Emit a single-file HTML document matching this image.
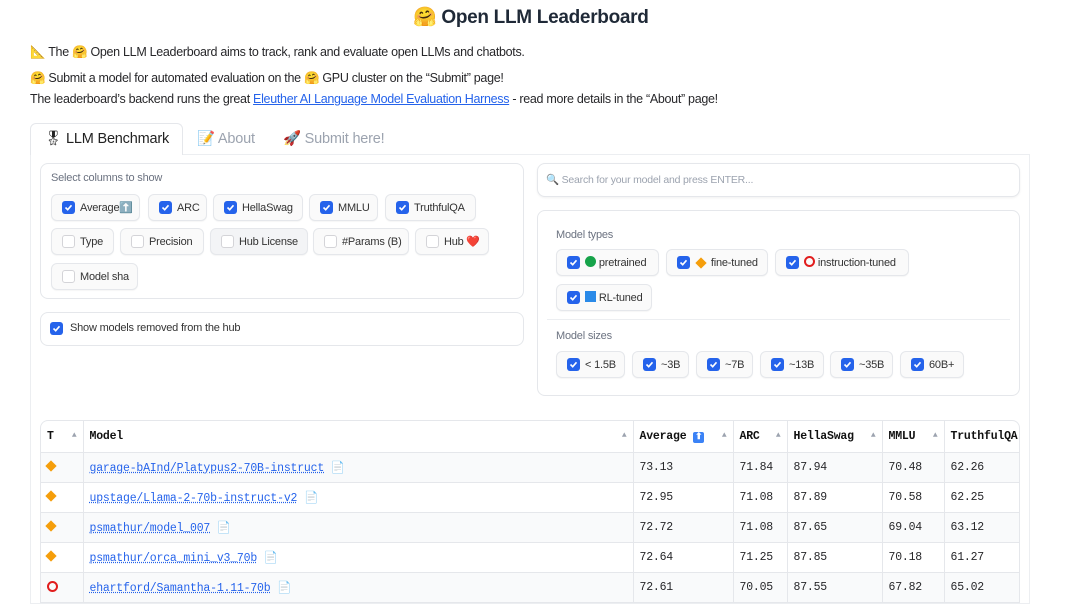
<!DOCTYPE html>
<html><head><meta charset="utf-8">
<style>
*{box-sizing:border-box;margin:0;padding:0}
body{width:1080px;height:595px;overflow:hidden;background:#fff;font-family:"Liberation Sans","Noto Sans CJK SC",sans-serif;color:#27272a;position:relative}
.a{position:absolute;white-space:nowrap}
.t{font-size:12.5px;letter-spacing:-0.3px}
.box{position:absolute;border:1px solid #e5e7eb;border-radius:8px;background:#fff}
.pill{position:absolute;height:27px;border:1px solid #e5e7eb;border-radius:6px;background:#fafafa;box-shadow:0 1px 1px rgba(0,0,0,.04);font-size:11px;letter-spacing:-0.2px;color:#333;line-height:27px;padding-left:28px}
.cb{position:absolute;left:10px;top:6px;width:13px;height:13px;border-radius:3px;background:#2563eb}
.cb svg{position:absolute;left:2px;top:2px}
.cb.off{background:#fff;border:1px solid #d4d4d8}
.lbl{font-size:11px;color:#6b7280;letter-spacing:-0.2px}
table{border-collapse:collapse;font-family:"Liberation Mono",monospace;font-size:11.5px;letter-spacing:-0.2px}
td,th{border-right:1px solid #e5e7eb;border-bottom:1px solid #e5e7eb;padding:0 6px;text-align:left;height:30px;vertical-align:middle}
th{font-weight:bold;color:#111;position:relative;height:31px}
th .s{position:absolute;right:6px;top:10px;font-size:8px;color:#9ca3af}
tr.g td{background:#f9fafb}
td a{color:#2563eb;text-decoration:underline dotted;}
.dia{display:inline-block;width:8px;height:8px;background:#f59e0b;transform:rotate(45deg);vertical-align:middle}
</style></head><body>
<div class="a" style="left:413px;top:5px;font-size:19px;font-weight:bold;color:#1f2937;letter-spacing:-0.3px">🤗 Open LLM Leaderboard</div>
<div class="a t" style="left:30px;top:45px">📐 The 🤗 Open LLM Leaderboard aims to track, rank and evaluate open LLMs and chatbots.</div>
<div class="a t" style="left:30px;top:71px">🤗 Submit a model for automated evaluation on the 🤗 GPU cluster on the “Submit” page!</div>
<div class="a t" style="left:30px;top:92px">The leaderboard’s backend runs the great <span style="color:#2563eb;text-decoration:underline">Eleuther AI Language Model Evaluation Harness</span> - read more details in the “About” page!</div>

<div class="a" style="left:30px;top:123px;width:153px;height:32px;border:1px solid #e5e7eb;border-bottom:none;border-radius:6px 6px 0 0;background:#fff;z-index:2"></div>
<div class="a" style="left:44px;top:130px;font-size:14.5px;color:#222;z-index:3;letter-spacing:-0.2px">🎖 LLM Benchmark</div>
<div class="a" style="left:197px;top:130px;font-size:14.5px;color:#9ca3af;letter-spacing:-0.2px">📝 About</div>
<div class="a" style="left:283px;top:130px;font-size:14.5px;color:#9ca3af;letter-spacing:-0.2px">🚀 Submit here!</div>
<div class="a" style="left:30px;top:154px;width:1000px;height:450px;border:1px solid #eceef1;background:#fff"></div>

<div class="box" style="left:40px;top:163px;width:484px;height:136px"></div>
<div class="a lbl" style="left:51px;top:172px">Select columns to show</div>
<div class="pill" style="left:51px;top:194px;width:89px"><span class="cb"><svg width="9" height="9"><path d="M1.5 4.5 L3.7 6.7 L7.5 2.3" stroke="#fff" stroke-width="1.6" fill="none"/></svg></span>Average⬆️</div>
<div class="pill" style="left:148px;top:194px;width:59px"><span class="cb"><svg width="9" height="9"><path d="M1.5 4.5 L3.7 6.7 L7.5 2.3" stroke="#fff" stroke-width="1.6" fill="none"/></svg></span>ARC</div>
<div class="pill" style="left:213px;top:194px;width:90px"><span class="cb"><svg width="9" height="9"><path d="M1.5 4.5 L3.7 6.7 L7.5 2.3" stroke="#fff" stroke-width="1.6" fill="none"/></svg></span>HellaSwag</div>
<div class="pill" style="left:309px;top:194px;width:69px"><span class="cb"><svg width="9" height="9"><path d="M1.5 4.5 L3.7 6.7 L7.5 2.3" stroke="#fff" stroke-width="1.6" fill="none"/></svg></span>MMLU</div>
<div class="pill" style="left:385px;top:194px;width:91px"><span class="cb"><svg width="9" height="9"><path d="M1.5 4.5 L3.7 6.7 L7.5 2.3" stroke="#fff" stroke-width="1.6" fill="none"/></svg></span>TruthfulQA</div>
<div class="pill" style="left:51px;top:228px;width:63px"><span class="cb off"></span>Type</div>
<div class="pill" style="left:120px;top:228px;width:84px"><span class="cb off"></span>Precision</div>
<div class="pill" style="left:210px;top:228px;width:98px;background:#f3f4f6"><span class="cb off"></span>Hub License</div>
<div class="pill" style="left:313px;top:228px;width:96px"><span class="cb off"></span>#Params (B)</div>
<div class="pill" style="left:415px;top:228px;width:74px"><span class="cb off"></span>Hub ❤️</div>
<div class="pill" style="left:51px;top:263px;width:87px"><span class="cb off"></span>Model sha</div>

<div class="box" style="left:40px;top:312px;width:484px;height:34px"></div>
<div class="a" style="left:50px;top:322px;width:13px;height:13px;border-radius:3px;background:#2563eb"><svg width="9" height="9" style="position:absolute;left:2px;top:2px"><path d="M1.5 4.5 L3.7 6.7 L7.5 2.3" stroke="#fff" stroke-width="1.6" fill="none"/></svg></div>
<div class="a" style="left:70px;top:322px;font-size:11px;color:#333;letter-spacing:-0.2px">Show models removed from the hub</div>

<div class="box" style="left:537px;top:163px;width:483px;height:34px;box-shadow:0 1px 2px rgba(0,0,0,.06)"></div>
<div class="a" style="left:546px;top:173px;font-size:10.5px;color:#9ca3af;letter-spacing:-0.2px">🔍 Search for your model and press ENTER...</div>

<div class="box" style="left:537px;top:210px;width:483px;height:186px"></div>
<div class="a" style="left:547px;top:319px;width:463px;height:1px;background:#eceef1"></div>
<div class="a lbl" style="left:556px;top:229px">Model types</div>
<div class="pill" style="left:556px;top:249px;width:103px"><span class="cb"><svg width="9" height="9"><path d="M1.5 4.5 L3.7 6.7 L7.5 2.3" stroke="#fff" stroke-width="1.6" fill="none"/></svg></span><span style="display:inline-block;width:11px;height:11px;border-radius:50%;background:#16a34a;vertical-align:-1px"></span> pretrained</div>
<div class="pill" style="left:666px;top:249px;width:102px"><span class="cb"><svg width="9" height="9"><path d="M1.5 4.5 L3.7 6.7 L7.5 2.3" stroke="#fff" stroke-width="1.6" fill="none"/></svg></span><span class="dia" style="margin:0 3px 0 2px"></span> fine-tuned</div>
<div class="pill" style="left:775px;top:249px;width:134px"><span class="cb"><svg width="9" height="9"><path d="M1.5 4.5 L3.7 6.7 L7.5 2.3" stroke="#fff" stroke-width="1.6" fill="none"/></svg></span><span style="display:inline-block;width:11px;height:11px;border-radius:50%;border:2px solid #e11d1d;vertical-align:-1px"></span> instruction-tuned</div>
<div class="pill" style="left:556px;top:284px;width:96px"><span class="cb"><svg width="9" height="9"><path d="M1.5 4.5 L3.7 6.7 L7.5 2.3" stroke="#fff" stroke-width="1.6" fill="none"/></svg></span><span style="display:inline-block;width:11px;height:11px;background:#2a8ae8;vertical-align:-1px"></span> RL-tuned</div>
<div class="a lbl" style="left:556px;top:330px">Model sizes</div>
<div class="pill" style="left:556px;top:351px;width:69px"><span class="cb"><svg width="9" height="9"><path d="M1.5 4.5 L3.7 6.7 L7.5 2.3" stroke="#fff" stroke-width="1.6" fill="none"/></svg></span>&lt; 1.5B</div>
<div class="pill" style="left:632px;top:351px;width:57px"><span class="cb"><svg width="9" height="9"><path d="M1.5 4.5 L3.7 6.7 L7.5 2.3" stroke="#fff" stroke-width="1.6" fill="none"/></svg></span>~3B</div>
<div class="pill" style="left:696px;top:351px;width:57px"><span class="cb"><svg width="9" height="9"><path d="M1.5 4.5 L3.7 6.7 L7.5 2.3" stroke="#fff" stroke-width="1.6" fill="none"/></svg></span>~7B</div>
<div class="pill" style="left:760px;top:351px;width:64px"><span class="cb"><svg width="9" height="9"><path d="M1.5 4.5 L3.7 6.7 L7.5 2.3" stroke="#fff" stroke-width="1.6" fill="none"/></svg></span>~13B</div>
<div class="pill" style="left:830px;top:351px;width:63px"><span class="cb"><svg width="9" height="9"><path d="M1.5 4.5 L3.7 6.7 L7.5 2.3" stroke="#fff" stroke-width="1.6" fill="none"/></svg></span>~35B</div>
<div class="pill" style="left:900px;top:351px;width:64px"><span class="cb"><svg width="9" height="9"><path d="M1.5 4.5 L3.7 6.7 L7.5 2.3" stroke="#fff" stroke-width="1.6" fill="none"/></svg></span>60B+</div>

<div class="a" style="left:40px;top:420px;width:980px;border:1px solid #e5e7eb;border-radius:8px 8px 0 0;overflow:hidden;border-bottom:none">
<table style="width:980px;table-layout:fixed">
<colgroup><col style="width:42px"><col style="width:550px"><col style="width:100px"><col style="width:54px"><col style="width:95px"><col style="width:62px"><col style="width:77px"></colgroup>
<tr><th>T<span class="s">▲</span></th><th>Model<span class="s">▲</span></th><th>Average <span style="display:inline-block;width:11px;height:11px;background:#3b82f6;border-radius:2px;color:#fff;font-size:9px;text-align:center;line-height:11px;vertical-align:0">⬆</span><span class="s">▲</span></th><th>ARC<span class="s">▲</span></th><th>HellaSwag<span class="s">▲</span></th><th>MMLU<span class="s">▲</span></th><th style="border-right:none;overflow:hidden">TruthfulQA</th></tr>
<tr class="g"><td><span class="dia"></span></td><td><a>garage-bAInd/Platypus2-70B-instruct</a> 📄</td><td>73.13</td><td>71.84</td><td>87.94</td><td>70.48</td><td style="border-right:none">62.26</td></tr>
<tr><td><span class="dia"></span></td><td><a>upstage/Llama-2-70b-instruct-v2</a> 📄</td><td>72.95</td><td>71.08</td><td>87.89</td><td>70.58</td><td style="border-right:none">62.25</td></tr>
<tr class="g"><td><span class="dia"></span></td><td><a>psmathur/model_007</a> 📄</td><td>72.72</td><td>71.08</td><td>87.65</td><td>69.04</td><td style="border-right:none">63.12</td></tr>
<tr><td><span class="dia"></span></td><td><a>psmathur/orca_mini_v3_70b</a> 📄</td><td>72.64</td><td>71.25</td><td>87.85</td><td>70.18</td><td style="border-right:none">61.27</td></tr>
<tr class="g"><td><span style="display:inline-block;width:11px;height:11px;border-radius:50%;border:2px solid #e11d1d;vertical-align:middle"></span></td><td><a>ehartford/Samantha-1.11-70b</a> 📄</td><td>72.61</td><td>70.05</td><td>87.55</td><td>67.82</td><td style="border-right:none">65.02</td></tr>
</table></div>
</body></html>
